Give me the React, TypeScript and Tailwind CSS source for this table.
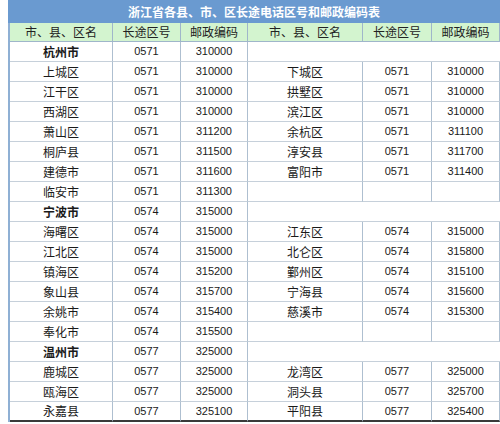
type Row = { city?: boolean; left: string[]; right?: string[] | null };

const rows: Row[] = [
  { city: true, left: ["杭州市", "0571", "310000"] },
  { left: ["上城区", "0571", "310000"], right: ["下城区", "0571", "310000"] },
  { left: ["江干区", "0571", "310000"], right: ["拱墅区", "0571", "310000"] },
  { left: ["西湖区", "0571", "310000"], right: ["滨江区", "0571", "310000"] },
  { left: ["萧山区", "0571", "311200"], right: ["余杭区", "0571", "311100"] },
  { left: ["桐庐县", "0571", "311500"], right: ["淳安县", "0571", "311700"] },
  { left: ["建德市", "0571", "311600"], right: ["富阳市", "0571", "311400"] },
  { left: ["临安市", "0571", "311300"], right: ["", "", ""] },
  { city: true, left: ["宁波市", "0574", "315000"] },
  { left: ["海曙区", "0574", "315000"], right: ["江东区", "0574", "315000"] },
  { left: ["江北区", "0574", "315000"], right: ["北仑区", "0574", "315800"] },
  { left: ["镇海区", "0574", "315200"], right: ["鄞州区", "0574", "315100"] },
  { left: ["象山县", "0574", "315700"], right: ["宁海县", "0574", "315600"] },
  { left: ["余姚市", "0574", "315400"], right: ["慈溪市", "0574", "315300"] },
  { left: ["奉化市", "0574", "315500"], right: ["", "", ""] },
  { city: true, left: ["温州市", "0577", "325000"] },
  { left: ["鹿城区", "0577", "325000"], right: ["龙湾区", "0577", "325000"] },
  { left: ["瓯海区", "0577", "325000"], right: ["洞头县", "0577", "325700"] },
  { left: ["永嘉县", "0577", "325100"], right: ["平阳县", "0577", "325400"] },
];

const header = ["市、县、区名", "长途区号", "邮政编码", "市、县、区名", "长途区号", "邮政编码"];

const cjk = "font-['Noto_Sans_CJK_SC',sans-serif]";
const num = "font-['Liberation_Sans',Arial,sans-serif] text-[11px]";

function Cell({ text, kind, last, bold }: { text: string; kind: "name" | "num"; last: boolean; bold?: boolean }) {
  return (
    <div
      className={`flex items-center justify-center border-r border-r-[#aebfd0] text-[#1a1a1a] ${
        last ? "h-[20px] border-b-2 border-b-[#3a3a3a]" : "h-[20px] border-b border-b-[#c6d0da]"
      } ${kind === "name" ? `${cjk} text-[12px]` : num} ${bold ? "font-bold" : ""}`}
    >
      {text}
    </div>
  );
}

export default function App() {
  return (
    <div className="w-[500px] h-[424px] bg-white pl-2 overflow-hidden">
      <div className={`h-[23px] bg-[#6a9ad0] text-white font-bold text-[12px] flex items-center justify-center ${cjk}`}>
        浙江省各县、市、区长途电话区号和邮政编码表
      </div>
      <div className="border-l-2 border-l-[#8fb0d4] grid grid-cols-[103px_68px_67px_115px_69px_68px]">
        {header.map((h, i) => (
          <div
            key={i}
            className={`h-[19px] bg-[#d3f4cf] flex items-center justify-center border-r border-r-[#9fb6ca] border-b border-b-[#9fb6ca] text-[12px] text-[#222] ${cjk}`}
          >
            {h}
          </div>
        ))}
        {rows.map((r, ri) => {
          const last = ri === rows.length - 1;
          return (
            <div key={ri} className="contents">
              <Cell text={r.left[0]} kind="name" last={last} bold={r.city} />
              <Cell text={r.left[1]} kind="num" last={last} />
              <Cell text={r.left[2]} kind="num" last={last} />
              {r.right ? (
                <>
                  <Cell text={r.right[0]} kind="name" last={last} />
                  <Cell text={r.right[1]} kind="num" last={last} />
                  <Cell text={r.right[2]} kind="num" last={last} />
                </>
              ) : (
                <div className="col-span-3 h-[20px] border-b border-b-[#c6d0da]" />
              )}
            </div>
          );
        })}
      </div>
    </div>
  );
}
